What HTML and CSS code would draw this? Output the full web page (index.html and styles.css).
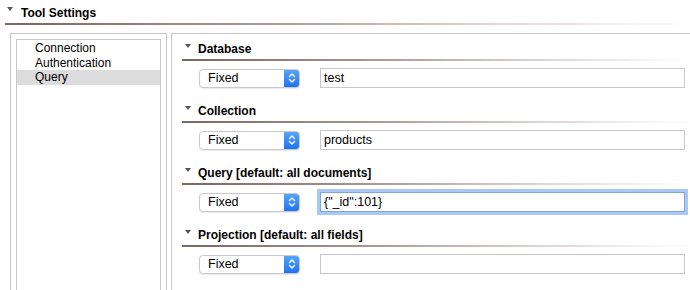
FILE: index.html
```html
<!DOCTYPE html>
<html lang="en">
  <head>
    <meta charset="UTF-8" />
    <title>Tool Settings</title>
    <link rel="stylesheet" href="styles.css">
  </head>
  <body>
    <div class="title-row">
      <span class="caret"></span>
      <h1>Tool Settings</h1>
    </div>
    <div class="rule title-rule"></div>

    <div class="main">
      <div class="side">
        <ul class="nav">
          <li>Connection</li>
          <li>Authentication</li>
          <li class="active">Query</li>
        </ul>
      </div>

      <div class="panel">
        <div class="section">
          <div class="section-head"><span class="caret"></span><h2>Database</h2></div>
          <div class="rule"></div>
          <div class="controls">
            <div class="select"><span>Fixed</span><span class="stepper"><svg viewBox="0 0 8 12"><path d="M1.5 4.5 4 2l2.5 2.5M1.5 7.5 4 10l2.5-2.5" fill="none" stroke="#fff" stroke-width="1.4" stroke-linecap="round" stroke-linejoin="round"/></svg></span></div>
            <input class="field" type="text" value="test" />
          </div>
        </div>

        <div class="section">
          <div class="section-head"><span class="caret"></span><h2>Collection</h2></div>
          <div class="rule"></div>
          <div class="controls">
            <div class="select"><span>Fixed</span><span class="stepper"><svg viewBox="0 0 8 12"><path d="M1.5 4.5 4 2l2.5 2.5M1.5 7.5 4 10l2.5-2.5" fill="none" stroke="#fff" stroke-width="1.4" stroke-linecap="round" stroke-linejoin="round"/></svg></span></div>
            <input class="field" type="text" value="products" />
          </div>
        </div>

        <div class="section">
          <div class="section-head"><span class="caret"></span><h2>Query [default: all documents]</h2></div>
          <div class="rule"></div>
          <div class="controls">
            <div class="select"><span>Fixed</span><span class="stepper"><svg viewBox="0 0 8 12"><path d="M1.5 4.5 4 2l2.5 2.5M1.5 7.5 4 10l2.5-2.5" fill="none" stroke="#fff" stroke-width="1.4" stroke-linecap="round" stroke-linejoin="round"/></svg></span></div>
            <input class="field focused" type="text" value='{"_id":101}' />
          </div>
        </div>

        <div class="section">
          <div class="section-head"><span class="caret"></span><h2>Projection [default: all fields]</h2></div>
          <div class="rule"></div>
          <div class="controls">
            <div class="select"><span>Fixed</span><span class="stepper"><svg viewBox="0 0 8 12"><path d="M1.5 4.5 4 2l2.5 2.5M1.5 7.5 4 10l2.5-2.5" fill="none" stroke="#fff" stroke-width="1.4" stroke-linecap="round" stroke-linejoin="round"/></svg></span></div>
            <input class="field" type="text" value="" />
          </div>
        </div>
      </div>
    </div>
  </body>
</html>
```

FILE: styles.css
```css
* {
  margin: 0;
  padding: 0;
  box-sizing: border-box;
}
html {
  background-color: #ffffff;
}
body {
  font-family: "Liberation Sans", Arial, sans-serif;
  font-size: 12px;
  color: #000;
  overflow: hidden;
  height: 290px;
}

.caret {
  display: inline-block;
  width: 0;
  height: 0;
  border-left: 3.5px solid transparent;
  border-right: 3.5px solid transparent;
  border-top: 4px solid #555;
}

.title-row {
  display: flex;
  align-items: center;
  height: 23px;
  padding: 2px 0 0 7px;
}
.title-row .caret {
  margin-top: -7px;
}
.title-row h1 {
  font-size: 12px;
  font-weight: bold;
  margin-left: 8px;
}

.rule {
  height: 2px;
  background: linear-gradient(90deg, #7c6461 0%, #a8928f 35%, #ddd3d2 70%, #ffffff 100%);
}
.title-rule {
  margin-left: 5px;
}

.main {
  display: flex;
  gap: 4px;
  margin-top: 8px;
  padding-left: 10px;
}

.side {
  width: 157px;
  height: 270px;
  border: 1px solid #c8c8c8;
  padding: 5px;
}
.nav {
  list-style: none;
  height: 100%;
  border: 1px solid #c8c8c8;
  padding-top: 1px;
}
.nav li {
  height: 14.5px;
  line-height: 14px;
  padding-left: 18px;
}
.nav li.active {
  background-color: #dcdcdc;
}

.panel {
  flex: 1;
  border-top: 1px solid #c8c8c8;
  border-left: 1px solid #c8c8c8;
  padding: 4px 0 0 10px;
}

.section {
  height: 62px;
}
.section-head {
  display: flex;
  align-items: center;
  height: 21px;
  padding-left: 3px;
}
.section-head .caret {
  margin-top: -6px;
}
.section-head h2 {
  font-size: 12px;
  font-weight: bold;
  margin-left: 7px;
}

.controls {
  display: flex;
  align-items: center;
  gap: 20px;
  margin-top: 7px;
  padding-left: 17px;
  padding-right: 5px;
}

.select {
  display: flex;
  align-items: center;
  justify-content: space-between;
  width: 101px;
  height: 19px;
  border: 1px solid #c9c9c9;
  border-radius: 4px;
  background: #fff;
  box-shadow: 0 1px 1px rgba(0, 0, 0, 0.08);
  padding-left: 8px;
  font-size: 12.5px;
  overflow: hidden;
}
.stepper {
  display: flex;
  align-items: center;
  justify-content: center;
  width: 16px;
  height: 19px;
  margin: -1px -1px -1px 0;
  border-radius: 0 4px 4px 0;
  background: linear-gradient(#5aa8fb, #1b6ff0);
}
.stepper svg {
  width: 8px;
  height: 12px;
}

.field {
  flex: 1;
  height: 20px;
  border: 1px solid #c8c8c8;
  font-family: "Liberation Sans", Arial, sans-serif;
  font-size: 12.5px;
  padding: 0 3px;
  color: #000;
  outline: none;
}
.field.focused {
  border-color: #7ea6e0;
  box-shadow: 0 0 0 3px #a9c8f5;
}
```
